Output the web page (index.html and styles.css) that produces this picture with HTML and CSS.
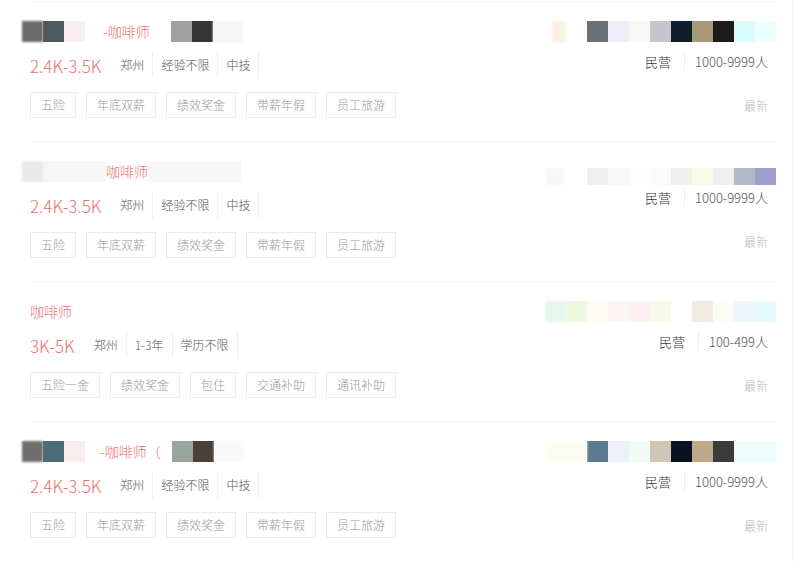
FILE: index.html
```html
<!DOCTYPE html>
<html lang="zh-CN">
<head>
  <meta charset="UTF-8" />
  <meta name="viewport" content="width=device-width, initial-scale=1.0"/>
  <title>职位列表</title>
  <link rel="stylesheet" href="styles.css">
</head>
<body>
  <div class="list">

    <div class="job">
      <div class="job-main">
        <div class="job-title">
          <span class="px soft" style="background:#6a6a6a"></span><span class="px" style="background:#4d5a5c"></span><span class="px" style="background:#fbeeee"></span><span class="px" style="width:18px"></span>
          <span class="name">-咖啡师</span>
          <span class="px" style="width:21px"></span><span class="px" style="background:#9fa29d"></span><span class="px" style="background:#363636"></span><span class="px soft" style="background:#f6f6f6;width:30px"></span>
        </div>
        <div class="job-info">
          <span class="salary">2.4K-3.5K</span>
          <span class="meta">郑州</span><span class="meta">经验不限</span><span class="meta">中技</span>
        </div>
        <div class="job-tags">
          <span class="tag">五险</span><span class="tag">年底双薪</span><span class="tag">绩效奖金</span><span class="tag">带薪年假</span><span class="tag">员工旅游</span>
        </div>
      </div>
      <div class="job-side">
        <div class="logo">
          <span class="px soft" style="background:#fbf1e2;width:14px"></span><span class="px" style="width:21px"></span><span class="px" style="background:#6b7177"></span><span class="px" style="background:#eeeefa"></span><span class="px" style="background:#f5faf5"></span><span class="px" style="background:#c5c5cc"></span><span class="px" style="background:#0f1c2a"></span><span class="px" style="background:#a69a7a"></span><span class="px" style="background:#1c1c1c"></span><span class="px" style="background:#dcfdfd"></span><span class="px" style="background:#effefe"></span>
        </div>
        <div class="company">
          <span class="kind">民营</span><span class="size">1000-9999人</span>
        </div>
        <div class="time">最新</div>
      </div>
    </div>

    <div class="job">
      <div class="job-main">
        <div class="job-title">
          <span class="px soft" style="background:#e9e9e9"></span><span class="px" style="background:#f6f6f6;width:63px"></span>
          <span class="name">咖啡师</span>
          <span class="px" style="background:#f7f7f7;width:93px"></span>
        </div>
        <div class="job-info">
          <span class="salary">2.4K-3.5K</span>
          <span class="meta">郑州</span><span class="meta">经验不限</span><span class="meta">中技</span>
        </div>
        <div class="job-tags">
          <span class="tag">五险</span><span class="tag">年底双薪</span><span class="tag">绩效奖金</span><span class="tag">带薪年假</span><span class="tag">员工旅游</span>
        </div>
      </div>
      <div class="job-side">
        <div class="logo low">
          <span class="px soft" style="background:#f7f7f7;width:17px"></span><span class="px" style="width:23px"></span><span class="px" style="background:#efefef"></span><span class="px" style="background:#f8f8fa"></span><span class="px" style="background:#fdfdfd"></span><span class="px" style="background:#fbfbfb"></span><span class="px" style="background:#eef0ee"></span><span class="px" style="background:#fafae8"></span><span class="px" style="background:#eeeeee"></span><span class="px" style="background:#b3bac6"></span><span class="px" style="background:#9e9ecb"></span>
        </div>
        <div class="company">
          <span class="kind">民营</span><span class="size">1000-9999人</span>
        </div>
        <div class="time">最新</div>
      </div>
    </div>

    <div class="job">
      <div class="job-main">
        <div class="job-title plain">
          <span class="name">咖啡师</span>
        </div>
        <div class="job-info">
          <span class="salary">3K-5K</span>
          <span class="meta">郑州</span><span class="meta">1-3年</span><span class="meta">学历不限</span>
        </div>
        <div class="job-tags">
          <span class="tag">五险一金</span><span class="tag">绩效奖金</span><span class="tag">包住</span><span class="tag">交通补助</span><span class="tag">通讯补助</span>
        </div>
      </div>
      <div class="job-side">
        <div class="logo">
          <span class="px soft" style="background:#e6f7ee"></span><span class="px" style="background:#f0f8e0"></span><span class="px" style="background:#fdfdf5"></span><span class="px" style="background:#fcf5f5"></span><span class="px" style="background:#fdf0f3"></span><span class="px" style="background:#f6fbe8"></span><span class="px" style="background:#ffffff"></span><span class="px" style="background:#f1ebe6"></span><span class="px" style="background:#fdfdf8"></span><span class="px" style="background:#eef7fb"></span><span class="px" style="background:#e6fbfd"></span>
        </div>
        <div class="company">
          <span class="kind">民营</span><span class="size">100-499人</span>
        </div>
        <div class="time">最新</div>
      </div>
    </div>

    <div class="job">
      <div class="job-main">
        <div class="job-title">
          <span class="px soft" style="background:#6e6e6e"></span><span class="px" style="background:#4e6a78"></span><span class="px" style="background:#f8ecec"></span><span class="px" style="width:15px"></span>
          <span class="name">-咖啡师（</span>
          <span class="px" style="width:11px"></span><span class="px" style="background:#9aa59c"></span><span class="px" style="background:#4b3f3c"></span><span class="px soft" style="background:#fafafa;width:30px"></span>
        </div>
        <div class="job-info">
          <span class="salary">2.4K-3.5K</span>
          <span class="meta">郑州</span><span class="meta">经验不限</span><span class="meta">中技</span>
        </div>
        <div class="job-tags">
          <span class="tag">五险</span><span class="tag">年底双薪</span><span class="tag">绩效奖金</span><span class="tag">带薪年假</span><span class="tag">员工旅游</span>
        </div>
      </div>
      <div class="job-side">
        <div class="logo">
          <span class="px soft" style="background:#fdfcf2;width:40px"></span><span class="px" style="background:#5e7a90"></span><span class="px" style="background:#eef0fa"></span><span class="px" style="background:#f0fbf6"></span><span class="px" style="background:#d1c6b6"></span><span class="px" style="background:#0b1120"></span><span class="px" style="background:#bda987"></span><span class="px" style="background:#3b3b3b"></span><span class="px" style="background:#edfdfd;width:42px"></span>
        </div>
        <div class="company">
          <span class="kind">民营</span><span class="size">1000-9999人</span>
        </div>
        <div class="time">最新</div>
      </div>
    </div>

  </div>
</body>
</html>
```

FILE: styles.css
```css
body {
  margin: 0;
  background: #fff;
  font-family: "Noto Sans CJK SC", "Noto Sans", sans-serif;
  font-weight: 300;
  color: #555;
}
.list {
  width: 793px;
  height: 561px;
  padding-top: 1px;
  box-sizing: border-box;
  border-right: 1px solid #f0f0f0;
  overflow: hidden;
}
.job {
  display: flex;
  justify-content: space-between;
  height: 140px;
  box-sizing: border-box;
  margin: 0 15px 0 32px;
  padding: 19px 9px 0 0;
  border-top: 1px solid #efefef;
}
.job-main {
  margin-left: -2px;
}

/* pixelated (redacted) parts */
.px {
  display: inline-block;
  width: 21px;
  height: 21px;
  flex: none;
}
.px.soft {
  filter: blur(1px);
}
.job-title {
  display: flex;
  align-items: center;
  height: 21px;
  margin-left: -8px;
}
.job-title.plain {
  margin-left: 0;
}
.name {
  font-size: 14px;
  line-height: 21px;
  color: #e8736f;
}

.job-info {
  display: flex;
  align-items: center;
  height: 26px;
  margin-top: 10px;
}
.salary {
  font-size: 17px;
  color: #ea7470;
  margin-right: 11px;
}
.meta {
  font-size: 12px;
  line-height: 26px;
  padding: 0 8px;
  border-right: 1px solid #eeeeee;
}
.job-tags {
  display: flex;
  gap: 10px;
  margin-top: 14px;
}
.tag {
  height: 26px;
  line-height: 24px;
  box-sizing: border-box;
  padding: 0 10px;
  border: 1px solid #ebebeb;
  font-size: 12px;
  color: #999;
}

.job-side {
  display: flex;
  flex-direction: column;
  align-items: flex-end;
}
.logo {
  display: flex;
  height: 21px;
  margin-right: -8px;
}
.logo.low {
  margin-top: 7px;
  height: 17px;
}
.logo.low .px {
  height: 17px;
}
.company {
  display: flex;
  align-items: center;
  height: 20px;
  margin-top: 9px;
  font-size: 13px;
  color: #555;
}
.logo.low + .company {
  margin-top: 2px;
}
.kind {
  color: #333;
  padding-right: 13px;
  border-right: 1px solid #eeeeee;
}
.size {
  padding-left: 10px;
}
.time {
  margin-top: 25px;
  font-size: 12px;
  line-height: 20px;
  color: #bbb;
}
```
